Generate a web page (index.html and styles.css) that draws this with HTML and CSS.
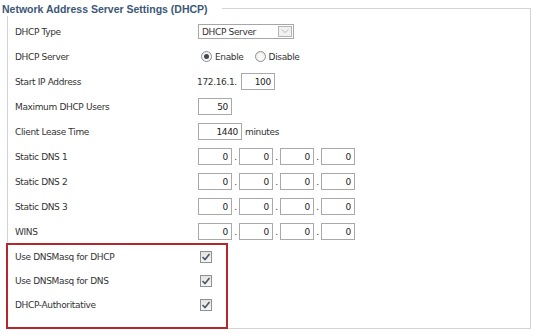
FILE: index.html
```html
<!DOCTYPE html>
<html lang="en">
<head>
    <meta charset="UTF-8">
    <title>DHCP Settings</title>
    <link rel="stylesheet" href="styles.css">
</head>
<body>

<fieldset class="panel">
    <legend>Network Address Server Settings (DHCP)</legend>

    <div class="row">
        <span class="label">DHCP Type</span>
        <div class="field">
            <div class="select">
                <span>DHCP Server</span>
                <span class="select-btn">
                    <svg width="8" height="5" viewBox="0 0 8 5"><path d="M0.5 0.5 L4 3.5 L7.5 0.5" fill="none" stroke="#b9bcc0" stroke-width="1"/></svg>
                </span>
            </div>
        </div>
    </div>

    <div class="row">
        <span class="label">DHCP Server</span>
        <div class="field">
            <span class="radio checked"></span><span class="opt">Enable</span>
            <span class="radio"></span><span class="opt">Disable</span>
        </div>
    </div>

    <div class="row">
        <span class="label">Start IP Address</span>
        <div class="field">
            <span class="prefix">172.16.1.</span>
            <input class="box" type="text" value="100">
        </div>
    </div>

    <div class="row">
        <span class="label">Maximum DHCP Users</span>
        <div class="field">
            <input class="box" type="text" value="50">
        </div>
    </div>

    <div class="row">
        <span class="label">Client Lease Time</span>
        <div class="field">
            <input class="box wide" type="text" value="1440">
            <span class="unit">minutes</span>
        </div>
    </div>

    <div class="row">
        <span class="label">Static DNS 1</span>
        <div class="field ip">
            <input class="box" type="text" value="0"><span class="dot">.</span><input class="box" type="text" value="0"><span class="dot">.</span><input class="box" type="text" value="0"><span class="dot">.</span><input class="box" type="text" value="0">
        </div>
    </div>

    <div class="row">
        <span class="label">Static DNS 2</span>
        <div class="field ip">
            <input class="box" type="text" value="0"><span class="dot">.</span><input class="box" type="text" value="0"><span class="dot">.</span><input class="box" type="text" value="0"><span class="dot">.</span><input class="box" type="text" value="0">
        </div>
    </div>

    <div class="row">
        <span class="label">Static DNS 3</span>
        <div class="field ip">
            <input class="box" type="text" value="0"><span class="dot">.</span><input class="box" type="text" value="0"><span class="dot">.</span><input class="box" type="text" value="0"><span class="dot">.</span><input class="box" type="text" value="0">
        </div>
    </div>

    <div class="row">
        <span class="label">WINS</span>
        <div class="field ip">
            <input class="box" type="text" value="0"><span class="dot">.</span><input class="box" type="text" value="0"><span class="dot">.</span><input class="box" type="text" value="0"><span class="dot">.</span><input class="box" type="text" value="0">
        </div>
    </div>

    <div class="marked">
        <div class="row short">
            <span class="label">Use DNSMasq for DHCP</span>
            <div class="field">
                <span class="check"><svg width="10" height="10" viewBox="0 0 10 10"><path d="M1.5 5 L4 7.5 L8.5 2" fill="none" stroke="#4b5561" stroke-width="1.6"/></svg></span>
            </div>
        </div>
        <div class="row short">
            <span class="label">Use DNSMasq for DNS</span>
            <div class="field">
                <span class="check"><svg width="10" height="10" viewBox="0 0 10 10"><path d="M1.5 5 L4 7.5 L8.5 2" fill="none" stroke="#4b5561" stroke-width="1.6"/></svg></span>
            </div>
        </div>
        <div class="row short">
            <span class="label">DHCP-Authoritative</span>
            <div class="field">
                <span class="check"><svg width="10" height="10" viewBox="0 0 10 10"><path d="M1.5 5 L4 7.5 L8.5 2" fill="none" stroke="#4b5561" stroke-width="1.6"/></svg></span>
            </div>
        </div>
    </div>
</fieldset>

</body>
</html>
```

FILE: styles.css
```css
body {
    margin: 0;
    background: #fff;
    font-family: "DejaVu Sans", Verdana, sans-serif;
    font-size: 9px;
    letter-spacing: -0.35px;
    color: #333;
}
.panel {
    box-sizing: border-box;
    width: 524px;
    margin: 0 0 0 7px;
    padding: 3px 0 0 7px;
    border: 1px solid #d3d3d3;
    min-width: 0;
}
.panel legend {
    margin-left: -13px;
    padding: 2px 14px 0 0;
    line-height: 14px;
    font-family: "Liberation Sans", Arial, sans-serif;
    font-size: 10.5px;
    font-weight: bold;
    letter-spacing: 0;
    color: #3b5877;
}
.row {
    display: grid;
    grid-template-columns: 183px 1fr;
    align-items: center;
    height: 25px;
}
.row.short {
    height: 24px;
}
.field {
    display: flex;
    align-items: center;
}
.select {
    box-sizing: border-box;
    display: flex;
    align-items: center;
    justify-content: space-between;
    width: 96px;
    height: 15px;
    padding: 0 1px 0 3px;
    border: 1px solid #a7a7a7;
    background: #fff;
}
.select-btn {
    box-sizing: border-box;
    display: flex;
    align-items: center;
    justify-content: center;
    width: 14px;
    height: 11px;
    border: 1px solid #b3b3b3;
    background: #f1f1f1;
}
.radio {
    box-sizing: border-box;
    width: 11px;
    height: 11px;
    margin: 0 3px 0 3px;
    border: 1px solid #8d8f91;
    border-radius: 50%;
    background: radial-gradient(circle at 50% 60%, #fff 0, #e8e8e8 100%);
    display: flex;
    align-items: center;
    justify-content: center;
}
.radio.checked::after {
    content: "";
    width: 5px;
    height: 5px;
    border-radius: 50%;
    background: #3f4852;
}
.opt {
    margin-right: 8px;
}
.prefix {
    margin: 0 4px 0 -1px;
}
.box {
    box-sizing: border-box;
    width: 34px;
    height: 17px;
    padding: 0 3px 0 0;
    border: 1px solid #a9a9a9;
    font-family: "DejaVu Sans", Verdana, sans-serif;
    font-size: 9px;
    letter-spacing: -0.35px;
    color: #222;
    text-align: right;
    background: #fff;
}
.box.wide {
    width: 44px;
}
.unit {
    margin-left: 3px;
}
.ip .dot {
    width: 7px;
    text-align: center;
}
.marked {
    box-sizing: border-box;
    width: 222px;
    margin: -1px 0 -1px -9px;
    padding: 0 0 10px 7px;
    border: 2px solid #b6262d;
}
.check {
    box-sizing: border-box;
    display: flex;
    align-items: center;
    justify-content: center;
    width: 12px;
    height: 12px;
    margin-left: 2px;
    border: 1px solid #8e9092;
    background: linear-gradient(#e3e3e3, #f7f7f7);
}
```
